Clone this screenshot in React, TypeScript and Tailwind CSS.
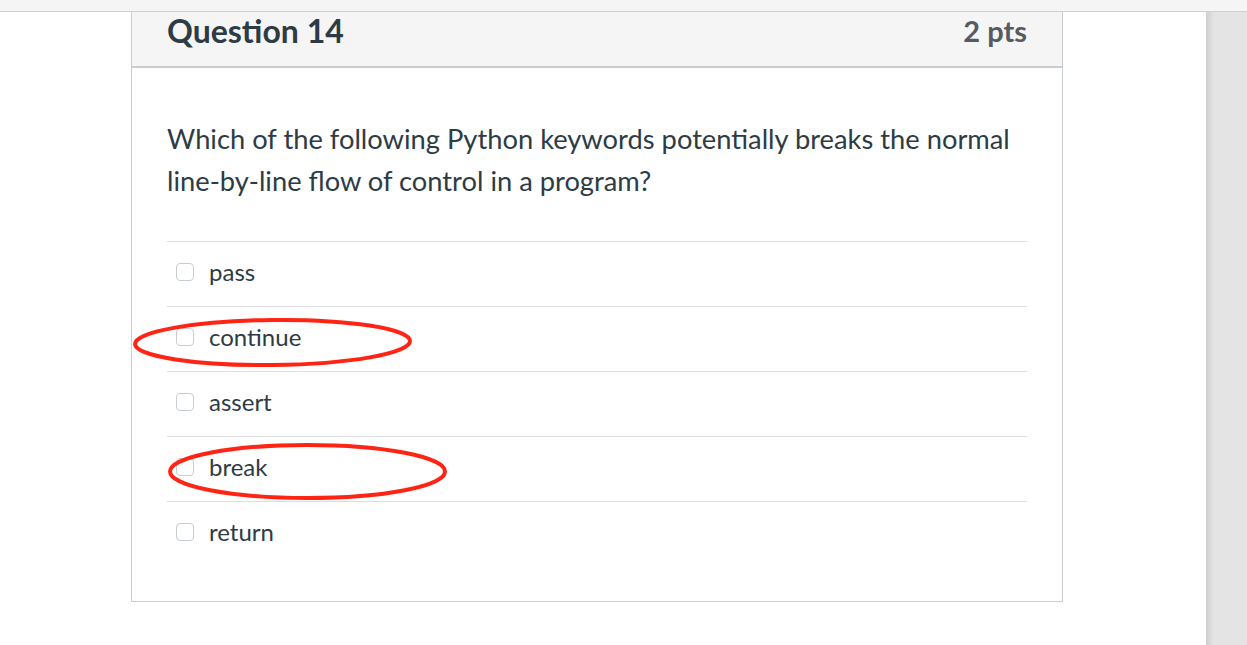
import React from 'react';

const options = ['pass', 'continue', 'assert', 'break', 'return'];

export default function App() {
  return (
    <div className="relative w-full h-[645px] bg-white overflow-hidden flex flex-col font-['Lato','Noto_Sans',sans-serif] text-[#2d3b45]">
      <div className="h-[12px] shrink-0 bg-[#f5f5f5] border-b border-[#cfcfcf]" />
      <div className="flex flex-1 min-h-0">
        <div className="flex-1 pl-[131px]">
          <div className="w-[932px] border-x border-b border-[#c7cdd1]">
            <div className="h-[56px] bg-[#f5f5f5] border-b-2 border-[#c7cdd1] px-[35px] pt-[2px] flex items-start justify-between">
              <h2 className="text-[32px] font-bold leading-[34px]">Question 14</h2>
              <span className="text-[29px] font-bold leading-[34px] text-[#555b60]">2 pts</span>
            </div>
            <div className="px-[35px] pt-[50px] pb-[35px]">
              <p className="text-[27.3px] leading-[42px]">
                Which of the following Python keywords potentially breaks the normal
                <br />
                line-by-line flow of control in a program?
              </p>
              <div className="mt-[39px]">
                {options.map((o) => (
                  <div key={o} className="h-[65px] border-t border-[#dcdfe2] flex items-center pl-[9px] gap-[15px] pb-[4px]">
                    <span className="w-[18px] h-[18px] rounded-[4px] border border-[#c7cdd1] bg-white shrink-0" />
                    <span className="text-[24px] leading-none">{o}</span>
                  </div>
                ))}
              </div>
            </div>
          </div>
        </div>
        <div className="w-[41px] shrink-0 bg-[linear-gradient(to_right,#cfcfcf,#e4e4e4_8px)]" />
      </div>
      <svg className="absolute left-0 top-0 pointer-events-none" width="1247" height="645">
        <ellipse cx="272.5" cy="342.5" rx="137.5" ry="22.5" fill="none" stroke="#ff2414" strokeWidth="4" transform="rotate(-0.6 272.5 342.5)" />
        <ellipse cx="307.5" cy="471.5" rx="137.5" ry="26.5" fill="none" stroke="#ff2414" strokeWidth="4" />
      </svg>
    </div>
  );
}
